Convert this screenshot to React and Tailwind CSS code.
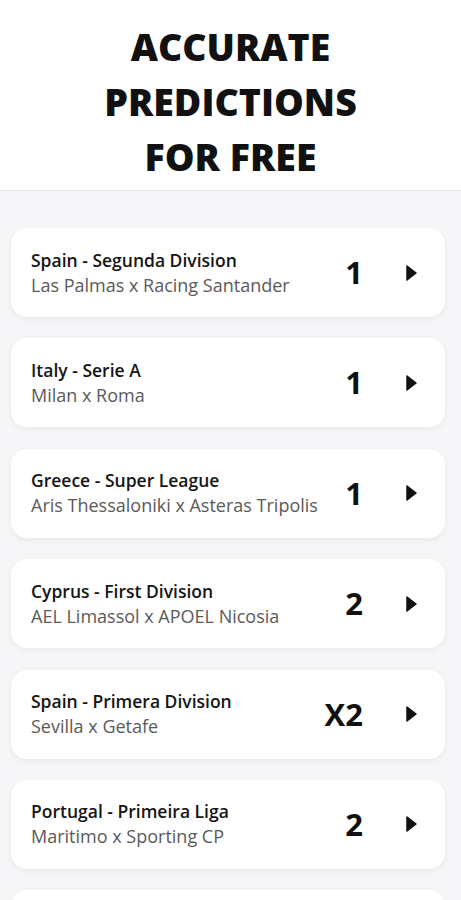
const predictions = [
  { league: 'Spain - Segunda Division', match: 'Las Palmas x Racing Santander', tip: '1' },
  { league: 'Italy - Serie A', match: 'Milan x Roma', tip: '1' },
  { league: 'Greece - Super League', match: 'Aris Thessaloniki x Asteras Tripolis', tip: '1' },
  { league: 'Cyprus - First Division', match: 'AEL Limassol x APOEL Nicosia', tip: '2' },
  { league: 'Spain - Primera Division', match: 'Sevilla x Getafe', tip: 'X2' },
  { league: 'Portugal - Primeira Liga', match: 'Maritimo x Sporting CP', tip: '2' },
];

const Arrow = () => (
  <svg width="11" height="16" viewBox="0 0 11 16" className="shrink-0">
    <path d="M1 1 L10 8 L1 15 Z" fill="#111" stroke="#111" strokeWidth="1.5" strokeLinejoin="round" />
  </svg>
);

const PredictionCard = ({ league, match, tip }) => (
  <div className="flex h-[89px] shrink-0 items-center rounded-2xl bg-white pl-5 pr-7 shadow-[0_2px_6px_rgba(0,0,0,0.06)]">
    <div className="min-w-0 flex-1">
      <p className="whitespace-nowrap text-[17.5px] font-semibold leading-[25px] text-[#151515]">{league}</p>
      <p className="whitespace-nowrap text-[18px] leading-[25px] text-[#5a5a5a]">{match}</p>
    </div>
    <span className="w-[53px] text-right text-[31px] font-bold leading-none text-[#111]">{tip}</span>
    <div className="ml-[43px]">
      <Arrow />
    </div>
  </div>
);

export default function App() {
  return (
    <div className="h-[900px] overflow-hidden bg-[#f6f6f8] font-['Open_Sans',sans-serif]">
      <header className="border-b border-[#e6e6e8] bg-white pb-[6px] pt-[19px] text-center">
        <h1 className="text-[37.5px] font-extrabold leading-[55px] text-[#111]">
          ACCURATE
          <br />
          PREDICTIONS
          <br />
          FOR FREE
        </h1>
      </header>
      <main className="flex flex-col gap-[21.4px] px-[11px] pt-[37px] pr-[16px]">
        {predictions.map((p) => (
          <PredictionCard key={p.league + p.match} {...p} />
        ))}
        <div className="h-[89px] shrink-0 rounded-2xl bg-white shadow-[0_2px_6px_rgba(0,0,0,0.06)]" />
      </main>
    </div>
  );
}
